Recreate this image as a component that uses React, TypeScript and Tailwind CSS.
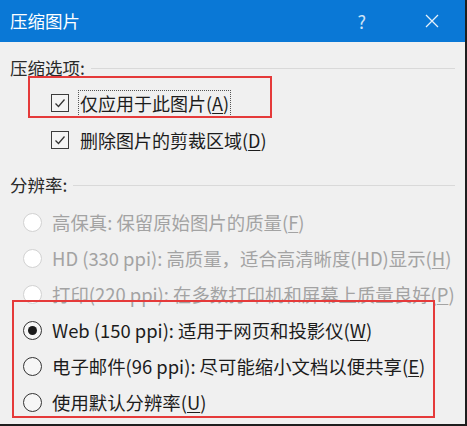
import React from "react";

const font = { fontFamily: '"Noto Sans CJK SC", "Noto Sans", sans-serif' };

function Heading({ label, className }: { label: string; className: string }) {
  return (
    <div className={`flex items-center pl-[10px] pr-[10px] ${className}`}>
      <span className="text-[17.5px] leading-none text-[#2a2a2a]">{label}</span>
      <div className="ml-[6px] h-px flex-1 bg-[#d9d9d9]" />
    </div>
  );
}

function Check({ text, hotkey, focused, className }: { text: string; hotkey: string; focused?: boolean; className: string }) {
  return (
    <div className={`flex items-center pl-[51px] ${className}`}>
      <div className="flex h-[18px] w-[18px] items-center justify-center border border-[#3c3c3c] bg-[#f4f4f4]">
        <svg width="14" height="14" viewBox="0 0 14 14">
          <polyline points="2.5,7.5 5.5,10.5 11.5,3.5" fill="none" stroke="#333" strokeWidth="1.3" />
        </svg>
      </div>
      <div
        className={`ml-[9px] flex h-[27px] items-center px-[1px] text-[18px] leading-none text-[#1c1c1c] ${
          focused ? "border border-dotted border-[#555]" : "border border-transparent"
        }`}
      >
        {text}(<span className="underline underline-offset-2">{hotkey}</span>)
      </div>
    </div>
  );
}

function Radio({ text, hotkey, disabled, selected }: { text: string; hotkey: string; disabled?: boolean; selected?: boolean }) {
  return (
    <div className="flex h-[36px] items-center pl-[23px]">
      <div
        className={`flex h-[19px] w-[19px] items-center justify-center rounded-full border ${
          disabled ? "border-[#d2d2d2] bg-white" : "border-[#333] bg-[#f6f6f6]"
        }`}
      >
        {selected && <div className="h-[9px] w-[9px] rounded-full bg-[#1a1a1a]" />}
      </div>
      <span
        className={`ml-[10px] whitespace-nowrap text-[18.4px] leading-none ${disabled ? "text-[#a3a3a3]" : "text-[#1c1c1c]"}`}
      >
        {text}(<span className="underline underline-offset-2">{hotkey}</span>)
      </span>
    </div>
  );
}

export default function App() {
  return (
    <div className="relative h-[426px] w-[467px] overflow-hidden border-b-2 border-r-2 border-[#1e1e1e] bg-[#f0f0f0]" style={font}>
      <div className="flex h-[42px] items-center bg-[#0a78d6] pl-[10px] text-white">
        <span className="text-[17.5px] leading-none">压缩图片</span>
        <span className="ml-auto text-[18px] leading-none text-[#cfe3f6]">?</span>
        <svg className="ml-[59px] mr-[26px]" width="14" height="14" viewBox="0 0 14 14">
          <path d="M1 1 L13 13 M13 1 L1 13" stroke="#e6f0fa" strokeWidth="1.3" />
        </svg>
      </div>

      <Heading label="压缩选项:" className="mt-[14px] h-[24px]" />
      <Check text="仅应用于此图片" hotkey="A" focused className="mt-[4px] h-[38px]" />
      <Check text="删除图片的剪裁区域" hotkey="D" className="h-[36px]" />

      <Heading label="分辨率:" className="mt-[14px] h-[26px]" />
      <div className="mt-[6px] flex flex-col">
        <Radio text="高保真: 保留原始图片的质量" hotkey="F" disabled />
        <Radio text="HD (330 ppi): 高质量，适合高清晰度(HD)显示" hotkey="H" disabled />
        <Radio text="打印(220 ppi): 在多数打印机和屏幕上质量良好" hotkey="P" disabled />
        <Radio text="Web (150 ppi): 适用于网页和投影仪" hotkey="W" selected />
        <Radio text="电子邮件(96 ppi): 尽可能缩小文档以便共享" hotkey="E" />
        <Radio text="使用默认分辨率" hotkey="U" />
      </div>

      <div className="absolute left-[28px] top-[76px] h-[42px] w-[244px] border-2 border-[#e53a3a]" />
      <div className="absolute left-[12px] top-[300px] h-[118px] w-[423px] border-2 border-[#e53a3a]" />
    </div>
  );
}
